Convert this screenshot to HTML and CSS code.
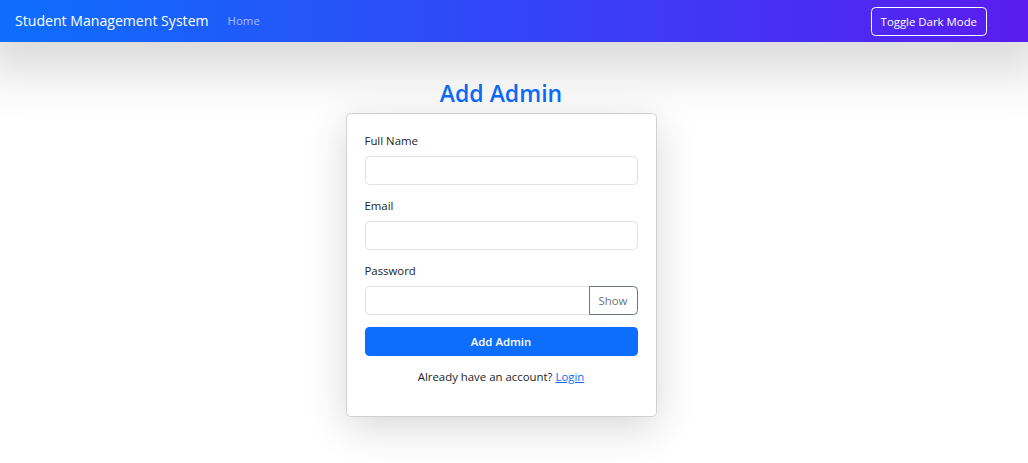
FILE: index.html
```html
<!DOCTYPE html>
<html lang="en">
<head>
<meta charset="utf-8">
<title>Add Admin</title>
<link rel="stylesheet" href="styles.css">
</head>
<body>
<nav class="navbar">
  <div class="nav-left">
    <a class="brand" href="#">Student Management System</a>
    <a class="nav-link" href="#">Home</a>
  </div>
  <button class="toggle-btn" type="button">Toggle Dark Mode</button>
</nav>
<main class="main">
  <h2 class="title">Add Admin</h2>
  <div class="card">
    <div class="field">
      <label class="label">Full Name</label>
      <input class="input" type="text">
    </div>
    <div class="field">
      <label class="label">Email</label>
      <input class="input" type="email">
    </div>
    <div class="field">
      <label class="label">Password</label>
      <div class="input-group">
        <input class="input group-input" type="password">
        <button class="show-btn" type="button">Show</button>
      </div>
    </div>
    <button class="submit" type="button">Add Admin</button>
    <p class="footer-text">Already have an account? <a href="#" class="link">Login</a></p>
  </div>
</main>
</body>
</html>
```

FILE: styles.css
```css
* { box-sizing: border-box; }
html, body { margin: 0; padding: 0; }
body {
  font-family: "Open Sans", "Noto Sans", sans-serif;
  font-size: 11.4px;
  line-height: 18px;
  color: #212529;
  background: #fff;
  width: 1028px;
  height: 463px;
  overflow: hidden;
}
.navbar {
  height: 42px;
  display: flex;
  align-items: center;
  justify-content: space-between;
  padding: 0 41px 0 15px;
  background: linear-gradient(90deg, #0d6efd 0%, #5a1cf0 100%);
  box-shadow: 0 10px 50px 20px rgba(0, 0, 0, 0.15);
  position: relative;
  z-index: 2;
}
.nav-left { display: flex; align-items: center; }
.brand {
  color: #fff;
  font-size: 14.1px;
  text-decoration: none;
  margin-right: 19px;
}
.nav-link {
  color: rgba(255, 255, 255, 0.6);
  text-decoration: none;
  font-size: 11.4px;
}
.toggle-btn {
  font-family: inherit;
  font-size: 11.4px;
  color: #fff;
  background: transparent;
  border: 1px solid #fff;
  border-radius: 4.5px;
  height: 29px;
  padding: 0 9px;
}
.main {
  display: flex;
  flex-direction: column;
  align-items: center;
  padding-top: 38px;
  padding-right: 26px;
}
.title {
  margin: 0 0 5px;
  font-size: 23px;
  font-weight: 600;
  line-height: 1.2;
  color: #0d6efd;
}
.card {
  width: 311px;
  padding: 18px;
  border: 1px solid #d0d0d0;
  border-radius: 4.5px;
  background: #fff;
  box-shadow: 0 10px 40px rgba(0, 0, 0, 0.16);
}
.field { margin-bottom: 12px; }
.label { display: block; margin-bottom: 6px; }
.input {
  display: block;
  width: 100%;
  height: 29px;
  border: 1px solid #dee2e6;
  border-radius: 4.5px;
  font-family: inherit;
  font-size: 12px;
  padding: 0 9px;
  background: #fff;
}
.input-group { display: flex; }
.group-input {
  flex: 1;
  border-top-right-radius: 0;
  border-bottom-right-radius: 0;
}
.show-btn {
  font-family: inherit;
  font-size: 11.4px;
  color: #6c757d;
  background: #fff;
  border: 1px solid #6c757d;
  border-radius: 0 4.5px 4.5px 0;
  height: 29px;
  width: 49px;
  padding: 0;
  margin-left: -1px;
}
.submit {
  display: block;
  width: 100%;
  height: 29px;
  border: none;
  border-radius: 4.5px;
  background: #0d6efd;
  color: #fff;
  font-family: inherit;
  font-size: 11.4px;
  font-weight: 600;
}
.footer-text {
  margin: 12px 0 12px;
  text-align: center;
}
.link { color: #0d6efd; text-decoration: underline; }
```
